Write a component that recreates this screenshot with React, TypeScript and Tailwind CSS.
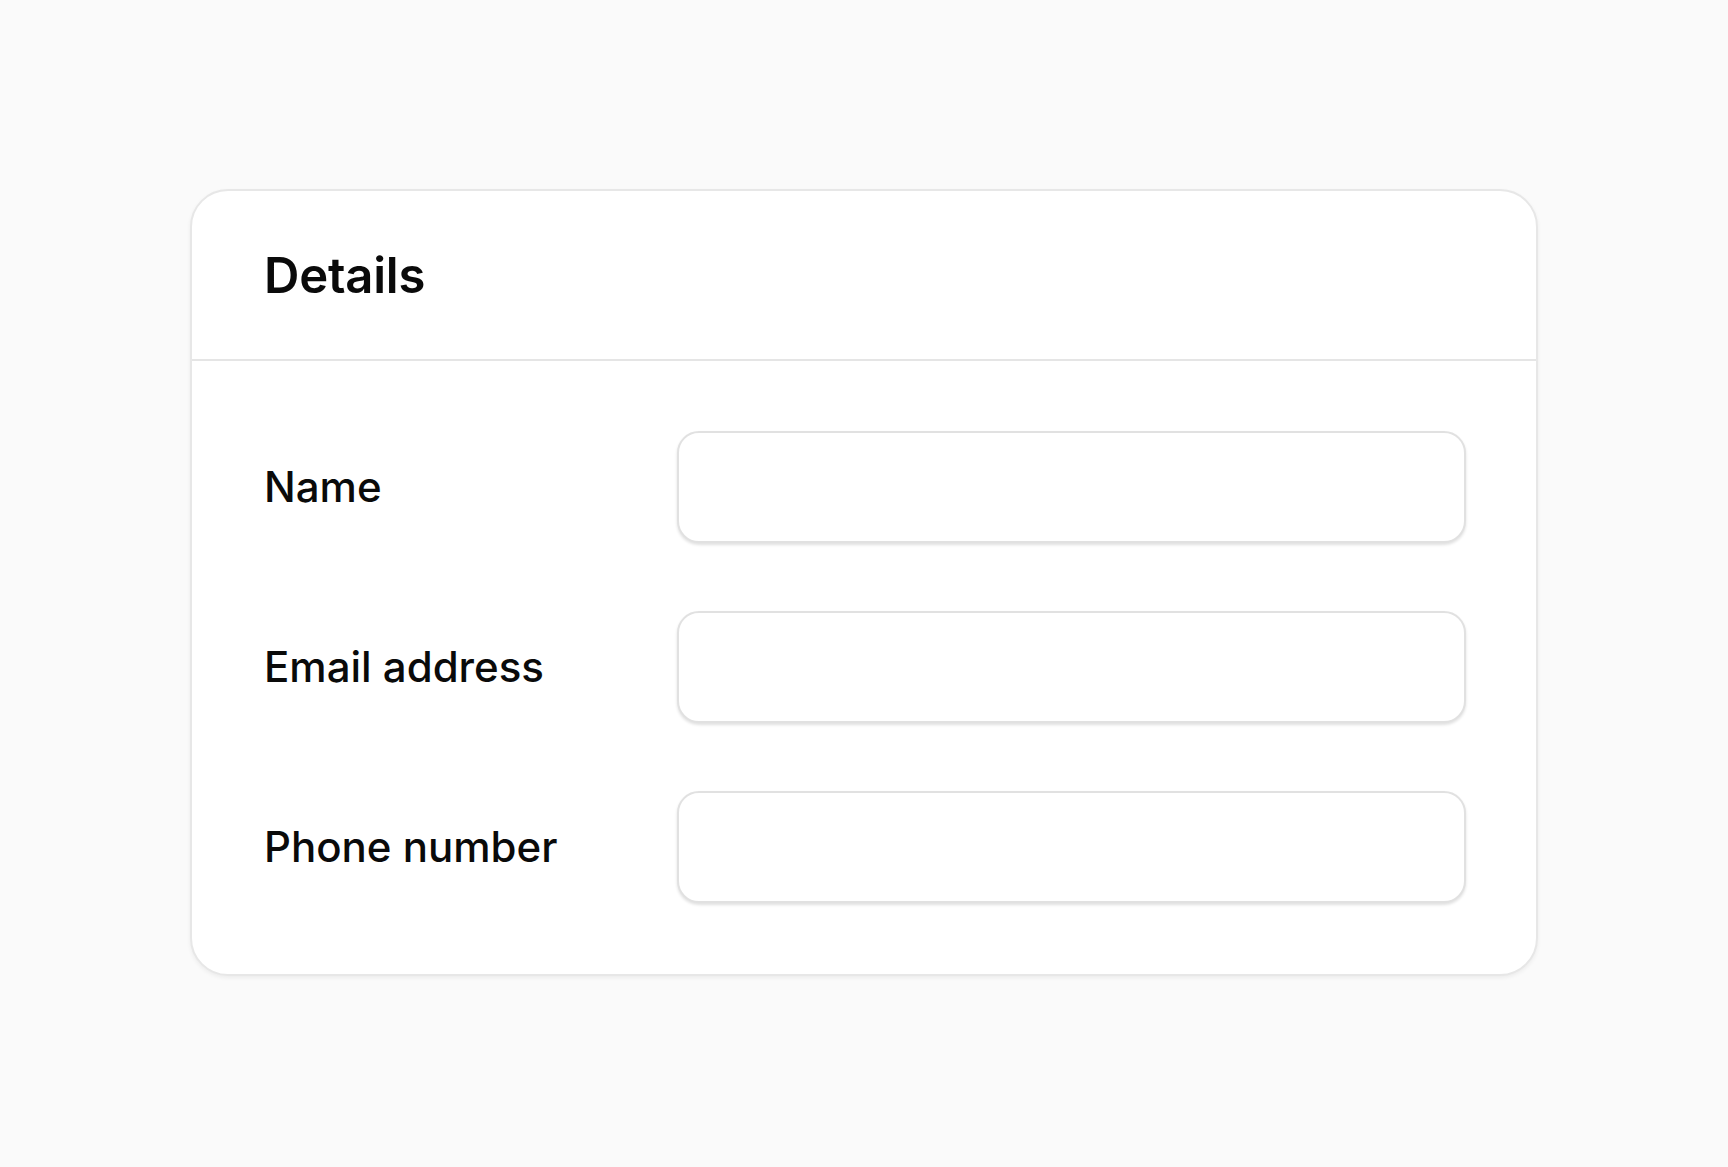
export default function App() {
  const fields = ['Name', 'Email address', 'Phone number'];

  return (
    <div className="min-h-screen bg-[#fafafa] pt-[189px] pl-[190px]" style={{ fontFamily: 'Inter, "Noto Sans", sans-serif' }}>
      <div className="w-[1348px] bg-white rounded-[38px] border-2 border-[#e7e7e7] shadow-[0_2px_4px_rgba(0,0,0,0.06)]">
        {/* Header */}
        <div className="h-[170px] pl-[72px] pr-[70px] flex items-center border-b-2 border-[#e5e5e5]">
          <h1 className="text-[49px] font-semibold text-[#0a0a0a] tracking-[-0.2px] leading-none">Details</h1>
        </div>

        {/* Fields */}
        <div className="pl-[72px] pr-[70px] pt-[70px] pb-[71px] flex flex-col gap-[68px]">
          {fields.map((label) => (
            <div key={label} className="flex items-center">
              <label className="w-[413px] text-[42px] font-medium text-[#0a0a0a] leading-none">{label}</label>
              <input
                type="text"
                className="w-[790px] h-[112px] rounded-[22px] border-2 border-[#e1e1e1] bg-white shadow-[0_2px_3px_rgba(0,0,0,0.12)] outline-none"
              />
            </div>
          ))}
        </div>
      </div>
    </div>
  );
}
